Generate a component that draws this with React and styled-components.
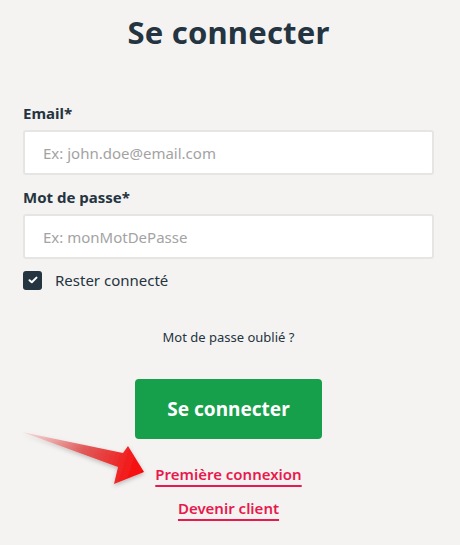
import React from "react";
import styled, { createGlobalStyle } from "styled-components";

const Global = createGlobalStyle`
  html, body { margin: 0; padding: 0; background: #f4f3f1; }
  body { font-family: "Noto Sans", "Open Sans", sans-serif; color: #243441; }
  * { box-sizing: border-box; }
`;

const Page = styled.div`
  position: relative;
  width: 460px;
  height: 545px;
  padding: 10px 26px 0 23px;
  display: flex;
  flex-direction: column;
  overflow: hidden;
`;

const Title = styled.h1`
  margin: 0;
  text-align: center;
  font-size: 31px;
  font-weight: 700;
  line-height: 44px;
  color: #243441;
  letter-spacing: 0.2px;
`;

const Form = styled.form`
  margin-top: 48px;
  display: flex;
  flex-direction: column;
`;

const Field = styled.div`
  display: flex;
  flex-direction: column;
  gap: 6px;
  margin-bottom: ${(p) => p.$mb || 0}px;
`;

const Label = styled.label`
  font-size: 15px;
  font-weight: 700;
  line-height: 22px;
  color: #243441;
`;

const Input = styled.input`
  height: 45px;
  width: 100%;
  border: 2px solid #e6e5e3;
  border-radius: 3px;
  background: #fff;
  padding: 0 18px;
  font-family: inherit;
  font-size: 15px;
  color: #243441;
  outline: none;
  &::placeholder { color: #a3a3a3; }
`;

const CheckRow = styled.label`
  margin-top: 11px;
  display: flex;
  align-items: center;
  gap: 13px;
  font-size: 15px;
  color: #243441;
  line-height: 20px;
`;

const Box = styled.span`
  width: 19px;
  height: 19px;
  border-radius: 3px;
  background: #243441;
  display: inline-flex;
  align-items: center;
  justify-content: center;
`;

const Forgot = styled.a`
  margin-top: 37px;
  align-self: center;
  font-size: 13px;
  color: #243441;
  text-decoration: none;
  line-height: 20px;
`;

const Submit = styled.button`
  margin-top: 32px;
  align-self: center;
  width: 187px;
  height: 60px;
  border: none;
  border-radius: 4px;
  background: #17a04b;
  color: #fff;
  font-family: inherit;
  font-size: 19px;
  font-weight: 700;
`;

const LinkList = styled.div`
  margin-top: 24px;
  display: flex;
  flex-direction: column;
  align-items: center;
  gap: 12px;
`;

const RedLink = styled.a`
  font-size: 15px;
  font-weight: 600;
  color: #e8194d;
  text-decoration: underline;
  text-decoration-thickness: 2px;
  text-underline-offset: 5px;
  line-height: 22px;
`;

const Arrow = styled.svg`
  position: absolute;
  left: 0;
  top: 0;
  pointer-events: none;
`;

export default function App() {
  return (
    <>
      <Global />
      <Page>
        <Title>Se connecter</Title>
        <Form onSubmit={(e) => e.preventDefault()}>
          <Field $mb={11}>
            <Label>Email*</Label>
            <Input placeholder="Ex: john.doe@email.com" />
          </Field>
          <Field>
            <Label>Mot de passe*</Label>
            <Input type="password" placeholder="Ex: monMotDePasse" />
          </Field>
          <CheckRow>
            <Box>
              <svg width="10" height="8" viewBox="0 0 10 8">
                <path d="M1.5 4.2 L3.8 6.3 L8.5 1.6" stroke="#fff" strokeWidth="2" fill="none" strokeLinecap="round" strokeLinejoin="round" />
              </svg>
            </Box>
            Rester connecté
          </CheckRow>
          <Forgot href="#">Mot de passe oublié ?</Forgot>
          <Submit type="submit">Se connecter</Submit>
        </Form>
        <LinkList>
          <RedLink href="#">Première connexion</RedLink>
          <RedLink href="#">Devenir client</RedLink>
        </LinkList>
        <Arrow width="460" height="545" viewBox="0 0 460 545">
          <defs>
            <linearGradient id="ag" x1="22" y1="432" x2="143" y2="472" gradientUnits="userSpaceOnUse">
              <stop offset="0" stopColor="#f4a0a0" stopOpacity="0.3" />
              <stop offset="0.5" stopColor="#e04545" stopOpacity="0.85" />
              <stop offset="1" stopColor="#fa0505" />
            </linearGradient>
            <filter id="sh" x="-20%" y="-20%" width="140%" height="160%">
              <feDropShadow dx="0" dy="2" stdDeviation="2" floodColor="#000" floodOpacity="0.25" />
            </filter>
          </defs>
          <polygon
            points="22,432 123,453 128,446 144,472 114,484 118,467"
            fill="url(#ag)"
            filter="url(#sh)"
          />
        </Arrow>
      </Page>
    </>
  );
}
